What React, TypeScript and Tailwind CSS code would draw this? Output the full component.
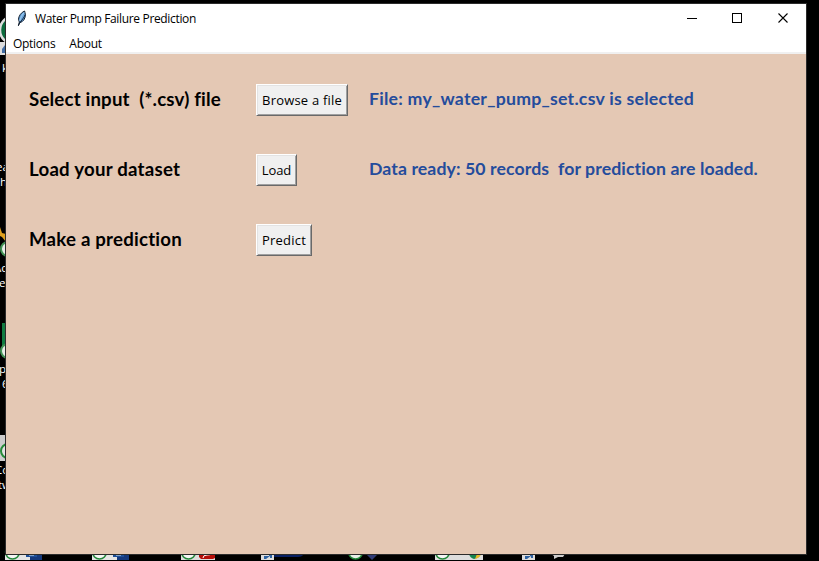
import React from "react";

type Row = { label: string; button: string; labelClass: string; buttonClass: string; textClass: string; status?: string; statusClass?: string };

const rows: Row[] = [
  {
    label: "Select input  (*.csv) file",
    button: "Browse a file",
    labelClass: "tracking-[0.18px]",
    buttonClass: "w-[92px]",
    textClass: "tracking-[0.2px]",
    status: "File: my_water_pump_set.csv is selected",
    statusClass: "tracking-[0.24px]",
  },
  {
    label: "Load your dataset",
    button: "Load",
    labelClass: "tracking-[0.23px]",
    buttonClass: "w-[41px]",
    textClass: "tracking-[-0.1px]",
    status: "Data ready: 50 records  for prediction are loaded.",
    statusClass: "tracking-[0.09px]",
  },
  { label: "Make a prediction", button: "Predict", labelClass: "tracking-[0.21px]", buttonClass: "w-[56px]", textClass: "tracking-[0.2px]" },
];

const captions = [
  { text: "k", place: "top-[60px] left-[2px]" },
  { text: "ea", place: "top-[159px] left-[-4px]" },
  { text: "h", place: "top-[174px] left-[0px]" },
  { text: "Ac", place: "top-[260px] left-[-6px]" },
  { text: "e", place: "top-[275px] left-[-1px]" },
  { text: "p", place: "top-[361px] left-[-1px]" },
  { text: "6", place: "top-[376px] left-[2px]" },
  { text: "Co", place: "top-[462px] left-[-5px]" },
  { text: "tw", place: "top-[477px] left-[-2px]" },
];

function DesktopIcons() {
  return (
    <svg className="absolute inset-0" width="819" height="561" viewBox="0 0 819 561">
      <circle cx="14" cy="30" r="14" fill="#0b6b3c" stroke="#ddd" strokeWidth="2.5" />
      <path d="M0 42h8v13H0z" fill="#ddd" />
      <path d="M2 53v-4l3-4v8z" fill="#416da5" />
      <path d="M0 227l2 6 4 1v8l-4-5-2-1z" fill="#e0a01d" />
      <circle cx="8" cy="249" r="7" fill="#e8eee8" stroke="#429355" strokeWidth="2" />
      <path d="M2 323h4v27H2z" fill="#107c41" />
      <circle cx="8" cy="351" r="7" fill="#e8eee8" stroke="#429355" strokeWidth="2" />
      <path d="M0 435h6v26H0z" fill="#ccc" />
      <circle cx="8" cy="451" r="7" fill="#e3e3e3" stroke="#258b39" strokeWidth="2" />
      <path d="M5 512h1v48H5z" fill="#555" />
      <g>
        <path d="M5 554h25v6H5z" fill="#e5e5e5" />
        <circle cx="12.5" cy="552" r="7" fill="#f5f5f5" stroke="#23883a" strokeWidth="1.5" />
        <path d="M26 554h16v6H30v-3h-4z" fill="#14387c" />
        <path d="M26 554h11v3H26z" fill="#1d4f99" />
        <path d="M29 555.5h5" stroke="#7f9fc8" />
      </g>
      <g>
        <path d="M92 554h25v6H92z" fill="#e5e5e5" />
        <circle cx="99.5" cy="552" r="7" fill="#f5f5f5" stroke="#23883a" strokeWidth="1.5" />
        <path d="M113 554h16v6h-12v-3h-4z" fill="#14387c" />
        <path d="M113 554h11v3h-11z" fill="#1d4f99" />
        <path d="M116 555.5h5" stroke="#7f9fc8" />
      </g>
      <path d="M181 554h34v6h-34z" fill="#ddd" />
      <circle cx="188.5" cy="552" r="7" fill="#f5f5f5" stroke="#23883a" strokeWidth="1.5" />
      <path d="M199 554h16v4l-2 1h-12l-2-2z" fill="#b40d08" />
      <path d="M203 558q0-3 4-3 3 0 4-1" fill="none" stroke="#fff" />
      <path d="M261 554h13v6h-13zM522 554h13v6h-13z" fill="#ddd" />
      <path d="M264 559v-3h5v-2h3v4h-2v-2l-4 3zM525 559v-3h5v-2h3v4h-2v-2l-4 3z" fill="#2e62a2" />
      <path d="M274 554h30q-2 3-6 3h-24z" fill="#071f63" />
      <circle cx="355.5" cy="552" r="7" fill="#e8eee8" stroke="#23883a" strokeWidth="1.5" />
      <path d="M366 554h12l-6 6z" fill="#2e3a75" />
      <path d="M435 554h48v6h-48z" fill="#ddd" />
      <circle cx="442.5" cy="552" r="7" fill="#f5f5f5" stroke="#23883a" strokeWidth="1.5" />
      <path d="M469 554h12q-2 4-7 5-4-1-5-5z" fill="#158450" />
      <path d="M477 554h4q-1 4-6 5z" fill="#e9b826" />
      <path d="M551 554h14l-2 3h-5l-4 2v-3z" fill="#ccc" />
    </svg>
  );
}

function Feather() {
  return (
    <svg width="10" height="17" viewBox="0 0 10 17">
      <path d="M7.6 1C4.2 2.3 1.700 6 1.500 9.200l.8 2.900-.9 3.600 1.400-3C6.300 11.700 8.400 8.700 8.400 4.400z" fill="#6ba6dd" stroke="#101c2c" strokeWidth="1" />
      <path d="M7.2 2.5C4.700 5 3.700 8 2.700 11" fill="none" stroke="#b4d8f5" strokeWidth=".8" />
      <path d="M8.2 4.500C7 8 4.800 10 2.500 13" fill="none" stroke="#122943" strokeWidth="1" />
    </svg>
  );
}

export default function App() {
  return (
    <div className="relative h-[561px] w-[819px] overflow-hidden bg-black pt-[3px] pl-[5px] text-black">
      <DesktopIcons />
      {captions.map((c) => (
        <span key={c.place} className={`absolute font-['Open_Sans',sans-serif] text-[11.5px] leading-[15px] text-white ${c.place}`}>
          {c.text}
        </span>
      ))}
      <main className="relative flex h-[552px] w-[802px] flex-col border border-[#2b2b2b] bg-[#e4c8b4]">
        <header className="flex h-[30px] shrink-0 items-center bg-white font-['Open_Sans',sans-serif] text-[12px]">
          <div className="ml-[11px] mt-[-2px]"><Feather /></div>
          <h1 className="ml-2 whitespace-nowrap text-[12px] leading-4 tracking-[-0.34px]">Water Pump Failure Prediction</h1>
          <svg className="ml-auto mr-[16px]" width="103" height="12" viewBox="0 0 103 12" fill="none" stroke="#000" shapeRendering="crispEdges">
            <path d="M0 5.5h10" />
            <rect x="45.5" y=".5" width="9" height="9" />
            <path d="M91.5.5l9 9m0-9l-9 9" shapeRendering="auto" strokeWidth="1.1" />
          </svg>
        </header>
        <nav className="flex h-5 shrink-0 gap-[14px] border-b-2 border-[#f0f0f0] bg-white pl-[7px] font-['Open_Sans',sans-serif] text-[12px] leading-5 tracking-[-0.28px]">
          <span>Options</span>
          <span>About</span>
        </nav>
        <section className="flex flex-col gap-[38px] pt-[30px] pl-[23px]">
          {rows.map((r) => (
            <div key={r.button} className="flex h-8 items-center">
              <div className="w-[227px] shrink-0 whitespace-pre pb-[2px] font-['Lato',sans-serif] text-[18.67px] font-bold leading-6">
                <span className={r.labelClass}>{r.label}</span>
              </div>
              <div className="w-[113px] shrink-0">
                <button className={`${r.buttonClass} flex h-8 items-center justify-center border border-t-white border-l-white border-r-[#696969] border-b-[#696969] bg-[#f0f0f0] pt-[2px] font-['Open_Sans',sans-serif] text-[13px] whitespace-nowrap shadow-[inset_1px_1px_#e3e3e3,inset_-1px_-1px_#a0a0a0]`}>
                  <span className={r.textClass}>{r.button}</span>
                </button>
              </div>
              {r.status && (
                <p className="whitespace-pre pb-[2px] font-['Lato',sans-serif] text-[17.7px] font-bold leading-6 text-[#244c9c]">
                  <span className={r.statusClass}>{r.status}</span>
                </p>
              )}
            </div>
          ))}
        </section>
      </main>
    </div>
  );
}
